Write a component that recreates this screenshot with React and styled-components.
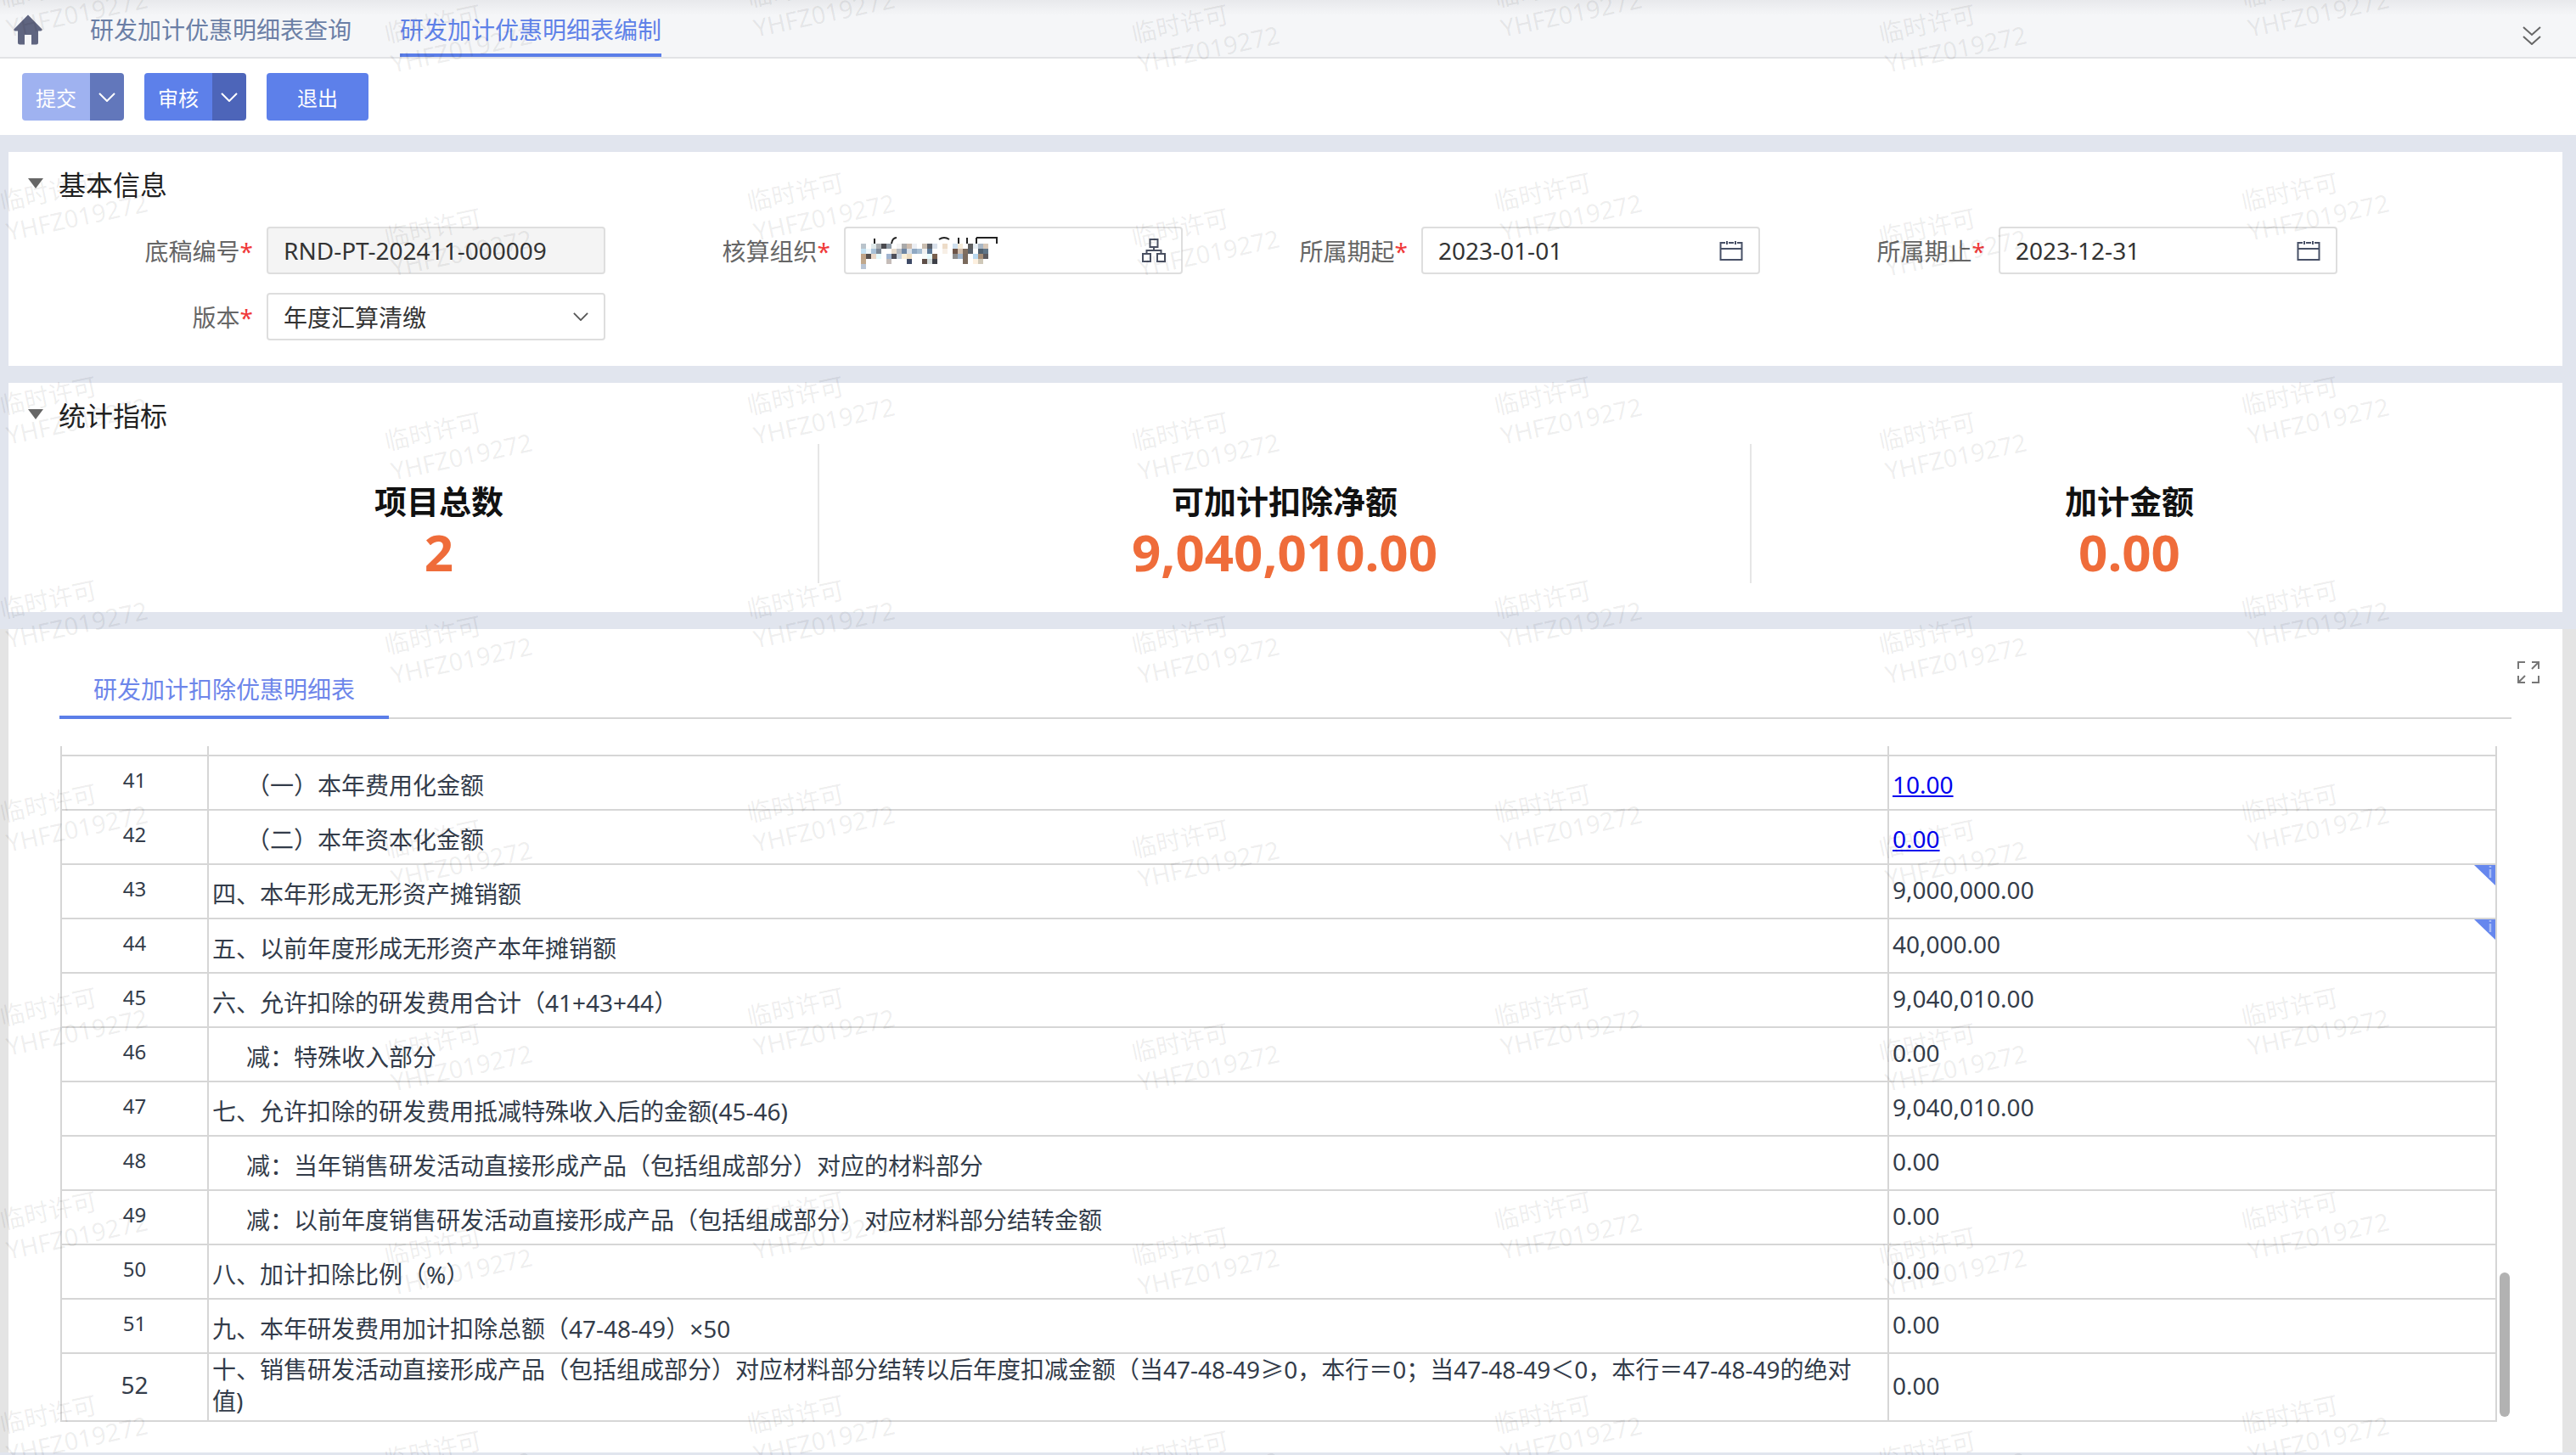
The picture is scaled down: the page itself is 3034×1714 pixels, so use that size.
import React from 'react';
import styled, { createGlobalStyle } from 'styled-components';

const rows = [
	{ no: 41, text: '（一）本年费用化金额', indent: true, value: '10.00', link: true },
	{ no: 42, text: '（二）本年资本化金额', indent: true, value: '0.00', link: true },
	{ no: 43, text: '四、本年形成无形资产摊销额', value: '9,000,000.00', flag: true },
	{ no: 44, text: '五、以前年度形成无形资产本年摊销额', value: '40,000.00', flag: true },
	{ no: 45, text: '六、允许扣除的研发费用合计（41+43+44）', value: '9,040,010.00' },
	{ no: 46, text: '减：特殊收入部分', indent: true, value: '0.00' },
	{ no: 47, text: '七、允许扣除的研发费用抵减特殊收入后的金额(45-46)', value: '9,040,010.00' },
	{ no: 48, text: '减：当年销售研发活动直接形成产品（包括组成部分）对应的材料部分', indent: true, value: '0.00' },
	{ no: 49, text: '减：以前年度销售研发活动直接形成产品（包括组成部分）对应材料部分结转金额', indent: true, value: '0.00' },
	{ no: 50, text: '八、加计扣除比例（%）', value: '0.00' },
	{ no: 51, text: '九、本年研发费用加计扣除总额（47-48-49）×50', value: '0.00' },
	{
		no: 52,
		text: '十、销售研发活动直接形成产品（包括组成部分）对应材料部分结转以后年度扣减金额（当47-48-49≥0，本行＝0；当47-48-49＜0，本行＝47-48-49的绝对值)',
		value: '0.00',
		tall: true,
	},
];

const stats = [
	{ title: '项目总数', value: '2' },
	{ title: '可加计扣除净额', value: '9,040,010.00' },
	{ title: '加计金额', value: '0.00' },
];

// 打码的组织名称，每格 6px
const mosaic = [
	['#b9c3cb', '', '#dfe9ea', '#a9adb0', '#4a4a4f', '#8f9aa5', '', '#f4f4f4', '#a9a9a9', '#cdbcae', '#eceff4', '', '#c9bdb0', '#5c6068', '#d8e0ea', '', '#eddcc8', '', '#cfe0ef', '#f5ead8', '', '#5e5e5e', '#e6edf2', '#a8b6c4', '#d8c8b8'],
	['#c5e2f3', '#eef7fa', '#a9c2d8', '#7e8a98', '', '', '#e8dccc', '#b8bcc2', '#6e86a4', '#d9e0e8', '#8fa8c2', '#a6bdd2', '#f0f0f0', '#5d7a98', '', '', '#f7efe6', '', '#6e5548', '#d2bfae', '#806e60', '#58606a', '', '#50606e', '#5f7486'],
	['#bfa488', '#55504e', '#ead8c8', '#e8fbfd', '', '#a0b4d0', '#4e4e58', '#c5d0dc', '#fbefd8', '#ecdcc0', '', '', '#f8fbfa', '#e6fbfd', '#78604e', '', '', '', '#8d8d8d', '#9fb4cc', '#7a6a5e', '', '#b9d8f0', '#a88f78', '#5c5a5e'],
	['#c0a88c', '', '', '', '', '#c5bcb8', '', '', '', '#3e4a66', '', '', '#5e4e48', '#d4dcdc', '#3e4048', '', '', '', '', '', '#7a6a5c', '', '#fdf0df', '#cfc8b8', ''],
	['#b8c4d4', '', '', '', '', '', '', '', '', '', '', '', '', '', '', '', '', '', '', '', '', '', '', '', ''],
];

const stamps = [];
for (let r = 0; r < 8; r++) {
	for (let c = 0; c < 4; c++) {
		stamps.push({ left: 2 + 880 * c, top: -39 + 240 * r });
		stamps.push({ left: 455 + 880 * c, top: 3 + 240 * r });
	}
}

const HomeIcon = () => (
	<svg width='34' height='36' viewBox='0 0 34 36'>
		<path
			d='M17 0.5 L33.6 17.5 Q34 19.5 32 19.5 L29 19.5 L29 33 Q29 35.5 26.5 35.5 L21 35.5 L21 24 L13 24 L13 35.5 L7.5 35.5 Q5 35.5 5 33 L5 19.5 L2 19.5 Q0 19.5 0.4 17.5 Z'
			fill='#5f6580'
		/>
	</svg>
);

const Chevron = ({ size = 20, height = 11, color = '#fff', weight = 2 }) => (
	<svg width={size} height={height} viewBox='0 0 20 11' preserveAspectRatio='none'>
		<path d='M1 1 L10 10 L19 1' fill='none' stroke={color} strokeWidth={weight} />
	</svg>
);

const DoubleChevron = () => (
	<svg width='22' height='22' viewBox='0 0 22 22'>
		<path d='M1 1 L11 10 L21 1 M1 12 L11 21 L21 12' fill='none' stroke='#666' strokeWidth='2' />
	</svg>
);

const OrgIcon = () => (
	<svg width='28' height='28' viewBox='0 0 28 28' fill='none' stroke='#4a5062' strokeWidth='2'>
		<rect x='9.5' y='1' width='9' height='9' />
		<rect x='1' y='18' width='9' height='9' />
		<rect x='18' y='18' width='9' height='9' />
		<path d='M14 10 V14 M5.5 18 V14 H22.5 V18' />
	</svg>
);

const CalendarIcon = () => (
	<svg width='28' height='23' viewBox='0 0 28 23' fill='none' stroke='#475066' strokeWidth='2'>
		<path d='M7 2 H1.5 V22 H26.5 V2 H21 M11 2 H17 M1.5 9 H26.5' />
		<path d='M9 0 V4 M19 0 V4' />
	</svg>
);

const ExpandIcon = () => (
	<svg width='26' height='26' viewBox='0 0 26 26' fill='none' stroke='#777' strokeWidth='2'>
		<path d='M1 9 V1 H9 M17 1 H25 V9 M25 17 V25 H17 M9 25 H1 V17' />
		<path d='M24 2 L17 9 M2 24 L9 17' />
	</svg>
);

const Flag = () => (
	<FlagMark width='25' height='24' viewBox='0 0 25 24'>
		<path d='M0 0 H25 V24 Z' fill='#6687ee' />
		<path d='M19 1 V3 M19 5 V15' stroke='#a9bdf5' strokeWidth='2.5' />
	</FlagMark>
);

const BlurredName = () => (
	<svg width='164' height='44' viewBox='0 0 164 44'>
		<path d='M16 8 V14 M36 14 Q37 7 42 7 M92 9 Q98 5 104 9 M115 7 V14 M125 7 V14 M136 7 H161 M136 7 V14 M160 7 V14' fill='none' stroke='#222' strokeWidth='2' />
		{mosaic.map((line, y) =>
			line.map((color, x) =>
				color ? <rect key={`${x}-${y}`} x={x * 6} y={14 + y * 6} width='6' height='6' fill={color} /> : null
			)
		)}
	</svg>
);

const Field = ({ label, muted, children }) => (
	<FieldWrapper>
		<FieldLabel>
			{label}
			<Required>*</Required>
		</FieldLabel>
		<InputBox $muted={muted}>{children}</InputBox>
	</FieldWrapper>
);

const SplitButton = ({ label, disabled }) => (
	<SplitWrapper>
		<SplitMain $disabled={disabled}>{label}</SplitMain>
		<SplitArrow $disabled={disabled}>
			<Chevron />
		</SplitArrow>
	</SplitWrapper>
);

const App = () => {
	return (
		<Page>
			<GlobalStyle />
			<TabBar>
				<HomeWrapper>
					<HomeIcon />
				</HomeWrapper>
				<TopTab>研发加计优惠明细表查询</TopTab>
				<TopTab $active>研发加计优惠明细表编制</TopTab>
				<TabBarEnd>
					<DoubleChevron />
				</TabBarEnd>
			</TabBar>

			<Toolbar>
				<SplitButton label='提交' disabled />
				<SplitButton label='审核' />
				<PlainButton>退出</PlainButton>
			</Toolbar>

			<InfoPanel>
				<SectionHeader>
					<SectionCaret />
					<SectionTitle>基本信息</SectionTitle>
				</SectionHeader>
				<FieldGrid>
					<Field label='底稿编号' muted>
						<InputText>RND-PT-202411-000009</InputText>
					</Field>
					<Field label='核算组织'>
						<BlurredName />
						<OrgIcon />
					</Field>
					<Field label='所属期起'>
						<InputText>2023-01-01</InputText>
						<CalendarIcon />
					</Field>
					<Field label='所属期止'>
						<InputText>2023-12-31</InputText>
						<CalendarIcon />
					</Field>
					<Field label='版本'>
						<InputText>年度汇算清缴</InputText>
						<Chevron size={18} height={10} color='#555' />
					</Field>
				</FieldGrid>
			</InfoPanel>

			<StatsPanel>
				<SectionHeader>
					<SectionCaret />
					<SectionTitle>统计指标</SectionTitle>
				</SectionHeader>
				<StatsRow>
					{stats.map((stat) => (
						<Stat key={stat.title}>
							<StatTitle>{stat.title}</StatTitle>
							<StatValue>{stat.value}</StatValue>
						</Stat>
					))}
				</StatsRow>
			</StatsPanel>

			<DetailOuter>
				<DetailPanel>
					<DetailTabs>
						<DetailTab>研发加计扣除优惠明细表</DetailTab>
					</DetailTabs>
					<ExpandButton>
						<ExpandIcon />
					</ExpandButton>
					<Table>
						<colgroup>
							<col width='173' />
							<col width='1979' />
							<col width='716' />
						</colgroup>
						<tbody>
							<StubRow>
								<td />
								<td />
								<td />
							</StubRow>
							{rows.map((row) => (
								<TableRow key={row.no} $tall={row.tall}>
									<NoCell $tall={row.tall}>{row.no}</NoCell>
									<TextCell $indent={row.indent} $tall={row.tall}>
										{row.text}
									</TextCell>
									<ValueCell $link={row.link} $tall={row.tall}>
										{row.link ? <ValueLink href='#'>{row.value}</ValueLink> : row.value}
										{row.flag && <Flag />}
									</ValueCell>
								</TableRow>
							))}
						</tbody>
					</Table>
					<ScrollThumb />
				</DetailPanel>
			</DetailOuter>

			<Watermarks>
				{stamps.map((stamp) => (
					<Stamp key={`${stamp.left}-${stamp.top}`} style={{ left: stamp.left, top: stamp.top }}>
						临时许可
						<br />
						YHFZ019272
					</Stamp>
				))}
			</Watermarks>
		</Page>
	);
};

const GlobalStyle = createGlobalStyle`
	html, body {
		margin: 0;
		padding: 0;
		background: #e1e5ee;
	}
	* {
		box-sizing: border-box;
	}
	body {
		font-family: 'Noto Sans', 'Noto Sans CJK SC', sans-serif;
	}
`;

const Page = styled.div`
	position: relative;
	display: flex;
	flex-direction: column;
	width: 3034px;
	height: 1714px;
	overflow: hidden;
	background: #e1e5ee;
	font-size: 28px;
`;

const TabBar = styled.div`
	display: flex;
	align-items: stretch;
	height: 69px;
	padding-left: 16px;
	background: linear-gradient(#e8e9ec 0, #f5f6f8 18px);
	border-bottom: 2px solid #e2e3e6;
`;

const HomeWrapper = styled.div`
	width: 90px;
	padding-top: 17px;
`;

const TopTab = styled.div`
	height: 67px;
	margin-right: 57px;
	padding-top: 15px;
	line-height: 40px;
	color: ${(props) => (props.$active ? '#5f82e8' : '#6b7fa6')};
	border-bottom: 4px solid ${(props) => (props.$active ? '#5b7ee8' : 'transparent')};
`;

const TabBarEnd = styled.div`
	margin-left: auto;
	padding: 23px 41px 0 0;
`;

const Toolbar = styled.div`
	display: flex;
	gap: 24px;
	height: 90px;
	padding: 17px 26px;
	background: #fff;
`;

const SplitWrapper = styled.div`
	display: flex;
	width: 120px;
	height: 56px;
	border-radius: 4px;
	overflow: hidden;
	color: #fff;
	font-size: 24px;
`;

const SplitMain = styled.div`
	display: flex;
	align-items: center;
	justify-content: center;
	width: 80px;
	background: ${(props) => (props.$disabled ? '#9fb2f0' : '#5d80ea')};
`;

const SplitArrow = styled.div`
	display: flex;
	align-items: center;
	justify-content: center;
	width: 40px;
	background: ${(props) => (props.$disabled ? '#6277bb' : '#4d65b9')};
`;

const PlainButton = styled.div`
	display: flex;
	align-items: center;
	justify-content: center;
	width: 120px;
	height: 56px;
	border-radius: 4px;
	color: #fff;
	font-size: 24px;
	background: #5d80ea;
`;

const InfoPanel = styled.section`
	height: 252px;
	margin: 20px 16px 0 10px;
	background: #fff;
`;

const StatsPanel = styled.section`
	height: 270px;
	margin: 20px 16px 0 10px;
	background: #fff;
`;

const SectionHeader = styled.div`
	display: flex;
	align-items: center;
	gap: 18px;
	height: 72px;
	padding: 2px 0 0 23px;
`;

const SectionCaret = styled.span`
	width: 0;
	height: 0;
	border-left: 9px solid transparent;
	border-right: 9px solid transparent;
	border-top: 12px solid #666;
`;

const SectionTitle = styled.h2`
	margin: 0;
	font-size: 32px;
	font-weight: 400;
	color: #222;
`;

const FieldGrid = styled.div`
	display: grid;
	grid-template-columns: repeat(4, 680px);
	row-gap: 22px;
	margin-top: 16px;
	padding-left: 23px;
`;

const FieldWrapper = styled.div`
	display: flex;
	align-items: center;
	gap: 16px;
`;

const FieldLabel = styled.label`
	width: 265px;
	text-align: right;
	color: #666;
	white-space: nowrap;
`;

const Required = styled.span`
	color: #f03a3a;
`;

const InputBox = styled.div`
	display: flex;
	align-items: center;
	justify-content: space-between;
	width: 399px;
	height: 56px;
	padding: 0 18px;
	border: 2px solid #dedede;
	border-radius: 4px;
	background: ${(props) => (props.$muted ? '#f4f4f4' : '#fff')};
	color: #333;
`;

const InputText = styled.span`
	white-space: nowrap;
`;

const StatsRow = styled.div`
	display: grid;
	grid-template-columns: 894px 1098px 890px;
	margin-left: 61px;
`;

const Stat = styled.div`
	display: flex;
	flex-direction: column;
	align-items: center;
	height: 164px;
	padding-top: 42px;
	border-right: 2px solid #e6e6e6;

	&:last-child {
		border-right: 0;
	}
`;

const StatTitle = styled.div`
	font-size: 38px;
	font-weight: 700;
	line-height: 50px;
	color: #111;
`;

const StatValue = styled.div`
	font-size: 60px;
	font-weight: 700;
	line-height: 70px;
	color: #ef6c3a;
`;

const DetailOuter = styled.div`
	height: 970px;
	margin-top: 20px;
	padding: 0 16px 0 10px;
	background: #e4e4e4;
`;

const DetailPanel = styled.section`
	position: relative;
	height: 970px;
	background: #fff;
`;

const DetailTabs = styled.div`
	display: flex;
	align-items: flex-end;
	width: 2888px;
	height: 106px;
	margin-left: 60px;
	border-bottom: 2px solid #d6d6d6;
`;

const DetailTab = styled.div`
	width: 388px;
	height: 58px;
	margin-bottom: -2px;
	padding-left: 40px;
	line-height: 46px;
	color: #6d86ea;
	border-bottom: 4px solid #5b7ee8;
`;

const ExpandButton = styled.div`
	position: absolute;
	top: 34px;
	left: 2955px;
`;

const Table = styled.table`
	width: 2868px;
	margin: 32px 0 0 61px;
	border-collapse: collapse;
	table-layout: fixed;
	color: #333c4a;

	td {
		padding: 0;
		border: 2px solid #d6d6d6;
	}
`;

const StubRow = styled.tr`
	height: 11px;

	td {
		border-top: 0;
	}
`;

const TableRow = styled.tr`
	height: ${(props) => (props.$tall ? '76px' : '64px')};
`;

const NoCell = styled.td`
	text-align: center;
	font-size: ${(props) => (props.$tall ? '28px' : '24px')};
	&& {
		padding-bottom: ${(props) => (props.$tall ? '6px' : '8px')};
	}
`;

const TextCell = styled.td`
	line-height: 37px;
	&& {
		padding: ${(props) => (props.$tall ? '0 8px 4px 4px' : '6px 8px 0 0')};
		padding-left: ${(props) => (props.$indent ? '44px' : '4px')};
	}
`;

const ValueCell = styled.td`
	position: relative;
	&& {
		padding-left: 4px;
		padding-top: ${(props) => (props.$link ? '4px' : '0')};
		padding-bottom: ${(props) => (props.$link ? '0' : '5px')};
	}
`;

const ValueLink = styled.a`
	color: #0000ee;
`;

const FlagMark = styled.svg`
	position: absolute;
	top: 0;
	right: 0;
	display: block;
`;

const ScrollThumb = styled.div`
	position: absolute;
	top: 758px;
	left: 2934px;
	width: 12px;
	height: 170px;
	border-radius: 6px;
	background: #b2b2b2;
`;

const Watermarks = styled.div`
	position: absolute;
	inset: 0;
	pointer-events: none;
	overflow: hidden;
`;

const Stamp = styled.div`
	position: absolute;
	width: 180px;
	font-size: 29px;
	line-height: 36px;
	white-space: nowrap;
	color: rgba(0, 0, 0, 0.075);
	transform: rotate(-12deg);
`;

export default App;
